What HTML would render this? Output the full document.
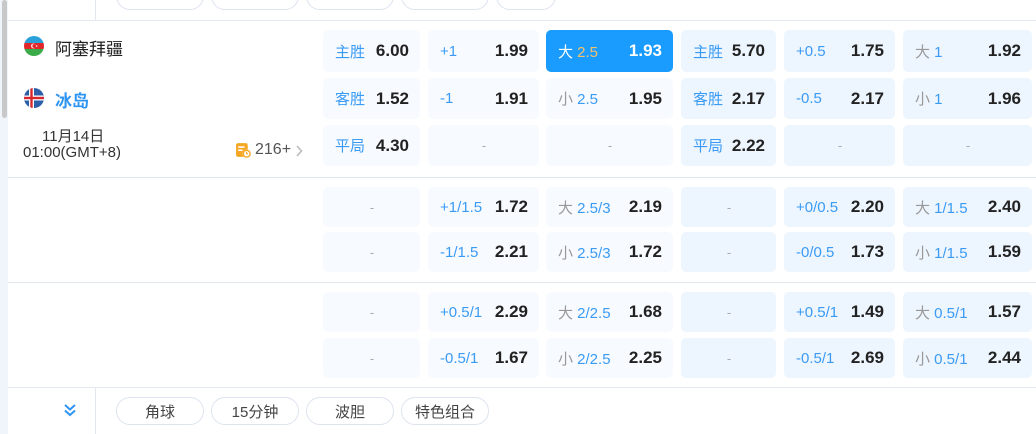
<!DOCTYPE html>
<html><head><meta charset="utf-8"><style>
*{margin:0;padding:0;box-sizing:border-box}
body{width:1036px;height:434px;overflow:hidden;background:#fff;font-family:"Liberation Sans","Noto Sans CJK SC",sans-serif;position:relative}
.a{position:absolute}
.c{position:absolute;border-radius:5px;display:flex;align-items:center;justify-content:space-between;padding:0 11px 0 12px;font-size:15px}
.l{background:#f7faff}.b{background:#edf5fe}
.c.d{justify-content:center;color:#aaa;font-size:13px}
.k{color:#3a9bf5}.g{color:#999}
.v{font-weight:bold;font-size:17px;color:#222}
.pill{position:absolute;height:28px;border:1px solid #dde3ef;border-radius:14px;font-size:15px;color:#444;display:flex;align-items:center;justify-content:center}
.hl{position:absolute;left:8px;right:0;height:1px;background:#e3e7f0}
</style></head><body>
<div class="a" style="left:0;top:0;width:8px;height:434px;background:#f0f5fc"></div>
<div class="a" style="left:2px;top:0;width:5px;height:118px;background:#c8c8c8;border-radius:3px"></div>
<div class="a" style="left:95px;top:0;width:1px;height:20px;background:#e3e7f0"></div>
<div class="pill" style="left:116px;top:-18px;width:88px"></div>
<div class="pill" style="left:211px;top:-18px;width:88px"></div>
<div class="pill" style="left:306px;top:-18px;width:88px"></div>
<div class="pill" style="left:401px;top:-18px;width:88px"></div>
<div class="pill" style="left:496px;top:-18px;width:60px"></div>
<div class="hl" style="top:20px"></div>

<svg class="a" style="left:24px;top:36px" width="20" height="20" viewBox="0 0 20 20"><defs><clipPath id="c1"><circle cx="10" cy="10" r="10"/></clipPath></defs><g clip-path="url(#c1)"><rect width="20" height="7" fill="#2aa0d8"/><rect y="7" width="20" height="6" fill="#e0282c"/><rect y="13" width="20" height="7" fill="#3bab4a"/><circle cx="9.5" cy="10" r="2.4" fill="#fff"/><circle cx="10.3" cy="10" r="2" fill="#e0282c"/><circle cx="12.6" cy="10" r=".8" fill="#fff"/></g></svg>
<div class="a" style="left:55px;top:35px;font-size:17px;color:#222">阿塞拜疆</div>
<svg class="a" style="left:24px;top:88px" width="20" height="20" viewBox="0 0 20 20"><defs><clipPath id="c2"><circle cx="10" cy="10" r="10"/></clipPath></defs><g clip-path="url(#c2)"><rect width="20" height="20" fill="#2d5ea8"/><rect x="5" width="5" height="20" fill="#fff"/><rect y="7.5" width="20" height="5" fill="#fff"/><rect x="6.3" width="2.4" height="20" fill="#d8262f"/><rect y="8.8" width="20" height="2.4" fill="#d8262f"/></g></svg>
<div class="a" style="left:55px;top:87px;font-size:17px;font-weight:bold;color:#2f95f2">冰岛</div>
<div class="a" style="left:42px;top:125px;font-size:15px;color:#333">11月14日</div>
<div class="a" style="left:23px;top:144px;font-size:15px;color:#333">01:00(GMT+8)</div>
<svg class="a" style="left:235px;top:142px" width="17" height="17" viewBox="0 0 16 16"><rect x="1" y="1" width="11" height="13" rx="2" fill="#f5a623"/><rect x="3" y="4" width="6" height="1.5" fill="#fff"/><rect x="3" y="7" width="4" height="1.5" fill="#fff"/><circle cx="11" cy="11" r="4" fill="#fff"/><circle cx="11" cy="11" r="3.2" fill="none" stroke="#f5a623" stroke-width="1.3"/><path d="M11 9.3V11h1.3" stroke="#f5a623" stroke-width="1" fill="none"/></svg>
<div class="a" style="left:255px;top:141px;font-size:16px;color:#555">216+</div>
<svg class="a" style="left:295px;top:145px" width="8" height="12" viewBox="0 0 8 12"><path d="M2 1l4.5 5L2 11" stroke="#bbb" stroke-width="1.6" fill="none"/></svg>

<div class="c l" style="left:323px;top:30px;width:97px;height:42px"><span class="k">主胜</span><span class="v">6.00</span></div>
<div class="c l" style="left:428px;top:30px;width:111px;height:42px"><span class="k">+1</span><span class="v">1.99</span></div>
<div class="c" style="left:546px;top:30px;width:127px;height:42px;background:#1a9cff"><span style="color:#fff">大 <span style="color:#f5c26b">2.5</span></span><span class="v" style="color:#fff">1.93</span></div>
<div class="c b" style="left:681px;top:30px;width:95px;height:42px"><span class="k">主胜</span><span class="v">5.70</span></div>
<div class="c b" style="left:784px;top:30px;width:111px;height:42px"><span class="k">+0.5</span><span class="v">1.75</span></div>
<div class="c b" style="left:903px;top:30px;width:129px;height:42px"><span class="g">大 <span class="k">1</span></span><span class="v">1.92</span></div>

<div class="c l" style="left:323px;top:78px;width:97px;height:41px"><span class="k">客胜</span><span class="v">1.52</span></div>
<div class="c l" style="left:428px;top:78px;width:111px;height:41px"><span class="k">-1</span><span class="v">1.91</span></div>
<div class="c l" style="left:546px;top:78px;width:127px;height:41px"><span class="g">小 <span class="k">2.5</span></span><span class="v">1.95</span></div>
<div class="c b" style="left:681px;top:78px;width:95px;height:41px"><span class="k">客胜</span><span class="v">2.17</span></div>
<div class="c b" style="left:784px;top:78px;width:111px;height:41px"><span class="k">-0.5</span><span class="v">2.17</span></div>
<div class="c b" style="left:903px;top:78px;width:129px;height:41px"><span class="g">小 <span class="k">1</span></span><span class="v">1.96</span></div>

<div class="c l" style="left:323px;top:125px;width:97px;height:41px"><span class="k">平局</span><span class="v">4.30</span></div>
<div class="c l d" style="left:428px;top:125px;width:111px;height:41px">-</div>
<div class="c l d" style="left:546px;top:125px;width:127px;height:41px">-</div>
<div class="c b" style="left:681px;top:125px;width:95px;height:41px"><span class="k">平局</span><span class="v">2.22</span></div>
<div class="c b d" style="left:784px;top:125px;width:111px;height:41px">-</div>
<div class="c b d" style="left:903px;top:125px;width:129px;height:41px">-</div>
<div class="hl" style="top:177px"></div>

<div class="c l d" style="left:323px;top:187px;width:97px;height:40px">-</div>
<div class="c l" style="left:428px;top:187px;width:111px;height:40px"><span class="k">+1/1.5</span><span class="v">1.72</span></div>
<div class="c l" style="left:546px;top:187px;width:127px;height:40px"><span class="g">大 <span class="k">2.5/3</span></span><span class="v">2.19</span></div>
<div class="c b d" style="left:681px;top:187px;width:95px;height:40px">-</div>
<div class="c b" style="left:784px;top:187px;width:111px;height:40px"><span class="k">+0/0.5</span><span class="v">2.20</span></div>
<div class="c b" style="left:903px;top:187px;width:129px;height:40px"><span class="g">大 <span class="k">1/1.5</span></span><span class="v">2.40</span></div>
<div class="c l d" style="left:323px;top:232px;width:97px;height:40px">-</div>
<div class="c l" style="left:428px;top:232px;width:111px;height:40px"><span class="k">-1/1.5</span><span class="v">2.21</span></div>
<div class="c l" style="left:546px;top:232px;width:127px;height:40px"><span class="g">小 <span class="k">2.5/3</span></span><span class="v">1.72</span></div>
<div class="c b d" style="left:681px;top:232px;width:95px;height:40px">-</div>
<div class="c b" style="left:784px;top:232px;width:111px;height:40px"><span class="k">-0/0.5</span><span class="v">1.73</span></div>
<div class="c b" style="left:903px;top:232px;width:129px;height:40px"><span class="g">小 <span class="k">1/1.5</span></span><span class="v">1.59</span></div>
<div class="hl" style="top:282px"></div>

<div class="c l d" style="left:323px;top:292px;width:97px;height:40px">-</div>
<div class="c l" style="left:428px;top:292px;width:111px;height:40px"><span class="k">+0.5/1</span><span class="v">2.29</span></div>
<div class="c l" style="left:546px;top:292px;width:127px;height:40px"><span class="g">大 <span class="k">2/2.5</span></span><span class="v">1.68</span></div>
<div class="c b d" style="left:681px;top:292px;width:95px;height:40px">-</div>
<div class="c b" style="left:784px;top:292px;width:111px;height:40px"><span class="k">+0.5/1</span><span class="v">1.49</span></div>
<div class="c b" style="left:903px;top:292px;width:129px;height:40px"><span class="g">大 <span class="k">0.5/1</span></span><span class="v">1.57</span></div>
<div class="c l d" style="left:323px;top:338px;width:97px;height:40px">-</div>
<div class="c l" style="left:428px;top:338px;width:111px;height:40px"><span class="k">-0.5/1</span><span class="v">1.67</span></div>
<div class="c l" style="left:546px;top:338px;width:127px;height:40px"><span class="g">小 <span class="k">2/2.5</span></span><span class="v">2.25</span></div>
<div class="c b d" style="left:681px;top:338px;width:95px;height:40px">-</div>
<div class="c b" style="left:784px;top:338px;width:111px;height:40px"><span class="k">-0.5/1</span><span class="v">2.69</span></div>
<div class="c b" style="left:903px;top:338px;width:129px;height:40px"><span class="g">小 <span class="k">0.5/1</span></span><span class="v">2.44</span></div>
<div class="hl" style="top:387px"></div>

<div class="a" style="left:95px;top:388px;width:1px;height:46px;background:#e3e7f0"></div>
<svg class="a" style="left:63px;top:403px" width="14" height="14" viewBox="0 0 14 14"><path d="M2 2l5 4.5L12 2M2 7.5l5 4.5 5-4.5" stroke="#2f95f2" stroke-width="2" fill="none"/></svg>
<div class="pill" style="left:116px;top:397px;width:88px">角球</div>
<div class="pill" style="left:211px;top:397px;width:88px">15分钟</div>
<div class="pill" style="left:306px;top:397px;width:88px">波胆</div>
<div class="pill" style="left:401px;top:397px;width:88px">特色组合</div>
</body></html>
